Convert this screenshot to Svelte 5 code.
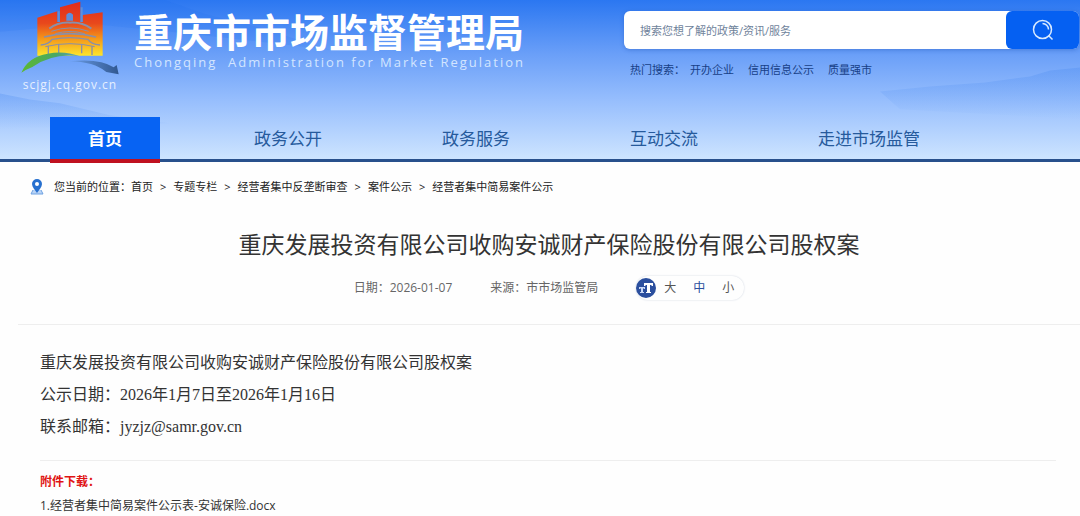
<script lang="ts">
	const navItems = ['首页', '政务公开', '政务服务', '互动交流', '走进市场监管'];
	const hotWords = ['开办企业', '信用信息公示', '质量强市'];
	const crumbs = ['首页', '专题专栏', '经营者集中反垄断审查', '案件公示', '经营者集中简易案件公示'];
	const sizes = [
		{ label: '大', value: 'large' },
		{ label: '中', value: 'medium' },
		{ label: '小', value: 'small' }
	];

	let active = $state('首页');
	let keyword = $state('');
	let size = $state('medium');

	function search(e: Event) {
		e.preventDefault();
		keyword = keyword.trim();
	}
</script>

<header>
	<svg class="hills" viewBox="0 0 1080 160" preserveAspectRatio="none" aria-hidden="true">
		<defs>
			<linearGradient id="mist" x1="0" y1="0" x2="0" y2="1">
				<stop offset="0" stop-color="#3f83ee" stop-opacity=".26" />
				<stop offset="1" stop-color="#3f83ee" stop-opacity="0" />
			</linearGradient>
		</defs>
		<path d="M0 0H165L205 14 260 28 330 50 190 34 90 24 0 32Z" fill="#1768f2" opacity=".12" />
		<path d="M0 94L30 100 60 104 110 116 170 124 0 130Z" fill="url(#mist)" />
		<path d="M880 92L930 87 985 83 1030 77 1050 71 1080 68V120L900 110Z" fill="url(#mist)" />
	</svg>
	<div class="top">
		<a class="brand" href="#home">
			<span class="emblem">
				<svg viewBox="60 0 300 228" width="100" height="76" aria-hidden="true">
					<defs>
						<linearGradient id="tower" x1="0" y1="0" x2="0" y2="1">
							<stop offset="0" stop-color="#e02a1c" />
							<stop offset=".4" stop-color="#e8481c" />
							<stop offset=".7" stop-color="#f59b1a" />
							<stop offset="1" stop-color="#fde52c" />
						</linearGradient>
						<linearGradient id="leaf" x1="0" y1="0" x2="1" y2="0">
							<stop offset="0" stop-color="#5cb833" />
							<stop offset=".6" stop-color="#4aa765" />
							<stop offset="1" stop-color="#5d9fd0" />
						</linearGradient>
						<linearGradient id="river" x1="0" y1="0" x2="1" y2="0">
							<stop offset="0" stop-color="#6b9de6" />
							<stop offset="1" stop-color="#315891" />
						</linearGradient>
					</defs>
					<path d="M112 53L172 34V66H180V22L241 5V66H248V45L308 37V167H112Z" fill="url(#tower)" />
					<g fill="none" stroke="#8a8fa8">
						<path d="M176 34V66M245 22V66" stroke="#5d8fdc" stroke-width="6" />
						<path d="M199 44q10-12 20 0v18h-20z" fill="#5d8fdc" stroke="none" />
						<path d="M148 86Q174 66 210 68Q246 66 274 86" stroke-width="6" />
						<path d="M154 94Q210 74 266 94M166 101Q210 88 254 101" stroke-width="3" />
						<path d="M132 111Q210 91 288 111" stroke-width="5" />
						<path d="M122 135Q148 132 156 118Q210 108 264 118Q272 132 300 135" stroke-width="4" />
						<path d="M136 140Q210 122 284 140" stroke-width="3" />
						<path d="M145 137V165M176 132V160M245 132V160M276 137V165" stroke-width="4" />
					</g>
					<path d="M64 218Q84 171 143 161Q194 151 240 169Q159 158 97 201Q77 209 64 218Z" fill="url(#leaf)" />
					<path d="M208 184Q300 174 341 202L350 195L356 223L319 216Q282 185 208 184Z" fill="url(#river)" />
				</svg>
				<span class="domain">scjgj.cq.gov.cn</span>
			</span>
			<span class="names">
				<strong>重庆市市场监督管理局</strong>
				<span class="english">Chongqing&nbsp; Administration for Market Regulation</span>
			</span>
		</a>
		<div class="finder">
			<form onsubmit={search}>
				<input type="text" aria-label="搜索" placeholder="搜索您想了解的政策/资讯/服务" bind:value={keyword} />
				<button type="submit" aria-label="搜索">
					<svg viewBox="0 0 22 22" width="22" height="22" fill="none" stroke="#d9eaff" stroke-width="1.5" aria-hidden="true">
						<circle cx="10.5" cy="10.5" r="9" />
						<path d="M10.5 4.5a6 6 0 0 1 6 6M16.5 16.5l4 4" />
					</svg>
				</button>
			</form>
			<div class="hot">
				<span>热门搜索：</span>
				{#each hotWords as word}
					<a href="#search">{word}</a>
				{/each}
			</div>
		</div>
	</div>
	<nav>
		{#each navItems as item}
			<a href="#nav" class:active={active === item} onclick={() => (active = item)}>{item}</a>
		{/each}
	</nav>
</header>

<div class="crumbs">
	<svg viewBox="0 0 14 16" width="14" height="16" aria-hidden="true">
		<path d="M3 11L1 15H13L11 11" fill="#b9d4f6" stroke="#6ea2e2" />
		<path d="M7 0a5 5 0 0 1 5 5c0 3-3 6-5 9c-2-3-5-6-5-9a5 5 0 0 1 5-5z" fill="#2770cf" />
		<circle cx="7" cy="5" r="2" fill="#fff" />
	</svg>
	<span>您当前的位置：</span>
	{#each crumbs as crumb, i}
		{#if i > 0}<span class="sep">&gt;</span>{/if}
		<a href="#crumb">{crumb}</a>
	{/each}
</div>

<main>
	<div class="heading">
		<h1>重庆发展投资有限公司收购安诚财产保险股份有限公司股权案</h1>
		<div class="meta">
			<span>日期：2026-01-07</span>
			<span>来源：市市场监管局</span>
			<div class="sizes">
				<svg viewBox="0 0 20 20" width="20" height="20" aria-hidden="true">
					<circle cx="10" cy="10" r="10" fill="#2b4f9e" />
					<path d="M8 5h9v3h-1l-1-1h-1v7h1v1h-5v-1h1V7h-1L9 8H8z" fill="#fff" />
					<path d="M3 9h6v2H8l-1-1v4h1v1H4v-1h1v-4l-1 1H3z" fill="#c9d8f5" />
				</svg>
				{#each sizes as s}
					<button type="button" class:chosen={size === s.value} onclick={() => (size = s.value)}>{s.label}</button>
				{/each}
			</div>
		</div>
	</div>
	<article class={size}>
		<p>重庆发展投资有限公司收购安诚财产保险股份有限公司股权案</p>
		<p>公示日期：2026年1月7日至2026年1月16日</p>
		<p>联系邮箱：jyzjz@samr.gov.cn</p>
	</article>
	<section class="files">
		<h2>附件下载：</h2>
		<a href="#docx">1.经营者集中简易案件公示表-安诚保险.docx</a>
	</section>
</main>

<style>
	:global(body) {
		margin: 0;
		background: #fefefe;
		color: #333;
		font-family: 'Open Sans', 'Noto Sans CJK SC', sans-serif;
	}
	a {
		color: inherit;
		text-decoration: none;
	}
	button,
	input {
		border: none;
		padding: 0;
		font-family: inherit;
	}
	header {
		position: relative;
		background: linear-gradient(#2b77f1 0, #6a9ff8 34%, #98bffd 64%, #cde4ff 100%);
		border-bottom: 3px solid #28508c;
	}
	.hills {
		position: absolute;
		inset: 0;
		width: 100%;
		height: 100%;
	}
	.top {
		position: relative;
		display: flex;
		justify-content: space-between;
		height: 117px;
		padding: 0 1px 0 20px;
	}
	.brand {
		display: flex;
		gap: 14px;
		color: #fff;
	}
	.emblem {
		display: flex;
		flex-direction: column;
		align-items: center;
	}
	.emblem svg {
		display: block;
	}
	.domain {
		font-size: 12px;
		line-height: 18px;
		letter-spacing: 1px;
		color: #e6f0ff;
	}
	.names {
		display: flex;
		flex-direction: column;
		padding-top: 12px;
		white-space: nowrap;
	}
	.names strong {
		font-size: 39px;
		line-height: 40px;
		font-weight: 700;
	}
	.english {
		font-size: 13px;
		line-height: 20px;
		letter-spacing: 2px;
		color: #d3e5ff;
	}
	.finder {
		flex: 0 0 455px;
		padding-top: 11px;
	}
	form {
		display: flex;
		height: 38px;
		border-radius: 6px;
		background: #fff;
		box-shadow: 0 1px 4px rgba(30, 80, 180, 0.4);
	}
	input {
		flex: 1;
		min-width: 0;
		padding: 0 16px;
		border-radius: 6px;
		font-size: 11px;
		background: transparent;
	}
	input::placeholder {
		color: #6f839b;
		opacity: 1;
	}
	form button {
		display: grid;
		place-items: center;
		width: 73px;
		border-radius: 6px;
		background: #0560f2;
	}
	.hot {
		display: flex;
		gap: 14px;
		padding: 12px 6px;
		font-size: 11px;
		line-height: 18px;
		color: #173f87;
	}
	.hot span {
		margin-right: -9px;
	}
	nav {
		position: relative;
		display: flex;
		height: 42px;
		padding-left: 50px;
		font-size: 17px;
		line-height: 44px;
		color: #265a9c;
		white-space: nowrap;
	}
	nav a {
		padding: 0 60px;
	}
	nav a:first-child {
		padding: 0 38px;
		margin-right: 34px;
	}
	nav .active {
		height: 42px;
		background: #0763f3;
		border-bottom: 4px solid #bf101f;
		color: #fff;
		font-weight: 700;
	}
	.crumbs {
		display: flex;
		align-items: center;
		padding: 16px 30px 0;
		font-size: 11px;
		line-height: 18px;
		color: #222;
	}
	.crumbs svg {
		margin-right: 10px;
	}
	.sep {
		padding: 0 7px;
	}
	main {
		margin-left: 18px;
	}
	.heading {
		padding: 30px 0 24px;
		border-bottom: 1px solid #eee;
		text-align: center;
	}
	h1 {
		margin: 0;
		font-size: 23px;
		line-height: 36px;
		font-weight: 400;
	}
	.meta {
		display: flex;
		justify-content: center;
		align-items: center;
		gap: 38px;
		padding-top: 14px;
		font-size: 12px;
		line-height: 24px;
		color: #666;
	}
	.sizes {
		display: flex;
		align-items: center;
		gap: 17px;
		padding-right: 10px;
		border-radius: 12px;
		box-shadow: 0 0 2px #ccd3de;
	}
	.sizes svg {
		margin-right: -9px;
	}
	.sizes button {
		background: none;
		font-size: 12px;
		line-height: 24px;
		color: #555;
	}
	.sizes .chosen {
		color: #2b4f9e;
	}
	article {
		margin: 0 24px 0 22px;
		padding: 22px 0 17px;
		border-bottom: 1px solid #eee;
		font-family: 'Liberation Serif', 'Noto Sans CJK SC', serif;
		font-size: 16px;
		line-height: 32px;
	}
	article.large {
		font-size: 18px;
	}
	article.small {
		font-size: 14px;
	}
	p {
		margin: 0;
	}
	.files {
		margin: 0 24px 0 22px;
		padding-top: 9px;
		font-size: 12px;
		line-height: 24px;
	}
	h2 {
		margin: 0;
		font-size: 12px;
		line-height: 24px;
		color: #e01414;
	}
</style>
